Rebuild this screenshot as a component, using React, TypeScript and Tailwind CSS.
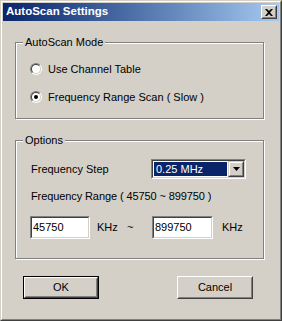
import React from 'react';

const font = { fontFamily: '"Liberation Sans", Arial, sans-serif' };

const Radio: React.FC<{ checked?: boolean; label: string }> = ({ checked, label }) => (
  <div className="flex items-center h-4">
    <span className="w-3 h-3 rounded-full border border-t-[#808080] border-l-[#808080] border-b-white border-r-white flex">
      <span className="flex-1 rounded-full border border-t-[#404040] border-l-[#404040] border-b-[#d4d0c8] border-r-[#d4d0c8] bg-white flex items-center justify-center">
        {checked && <span className="w-1 h-1 rounded-full bg-black" />}
      </span>
    </span>
    <span className="ml-[6px] text-[11px] text-black leading-none">{label}</span>
  </div>
);

const Group: React.FC<{ title: string; className: string; children: React.ReactNode }> = ({ title, className, children }) => (
  <div className={`relative ml-[12px] w-[249px] border border-[#808080] shadow-[inset_1px_1px_0_#fff,1px_1px_0_#fff] ${className}`}>
    {/* legend sits over the etched line */}
    <span className="absolute -top-[8px] left-[7px] px-[2px] bg-[#d4d0c8] text-[11px] leading-[14px] text-black">{title}</span>
    {children}
  </div>
);

const Sunken: React.FC<{ className: string; children: React.ReactNode }> = ({ className, children }) => (
  <div className={`border border-t-[#808080] border-l-[#808080] border-b-white border-r-white ${className}`}>
    <div className="h-full border border-t-[#404040] border-l-[#404040] border-b-[#d4d0c8] border-r-[#d4d0c8] bg-white flex items-center">
      {children}
    </div>
  </div>
);

const Button: React.FC<{ label: string; isDefault?: boolean }> = ({ label, isDefault }) => (
  <div className={`w-[76px] h-[23px] ${isDefault ? 'border border-black' : ''}`}>
    <div className="h-full border border-t-white border-l-white border-b-[#404040] border-r-[#404040]">
      <div className="h-full border border-t-[#d4d0c8] border-l-[#d4d0c8] border-b-[#808080] border-r-[#808080] flex items-center justify-center text-[11px] text-black">
        {label}
      </div>
    </div>
  </div>
);

export default function App() {
  return (
    <div className="w-[282px] h-[321px] bg-[#d4d0c8] select-none" style={font}>
      <div className="h-full border border-t-[#d4d0c8] border-l-[#d4d0c8] border-b-[#404040] border-r-[#404040]">
        <div className="h-full border border-t-white border-l-white border-b-[#808080] border-r-[#808080] p-px">
          {/* Title bar */}
          <div className="h-[18px] bg-gradient-to-r from-[#0a246a] to-[#a6caf0] flex items-center justify-between pl-[3px] pr-[2px]">
            <span className="text-white font-bold text-[11.5px] leading-none">AutoScan Settings</span>
            <div className="w-4 h-[14px] border border-t-white border-l-white border-b-[#404040] border-r-[#404040]">
              <div className="h-full border border-t-[#d4d0c8] border-l-[#d4d0c8] border-b-[#808080] border-r-[#808080] bg-[#d4d0c8] flex items-center justify-center">
                <svg width="8" height="7" viewBox="0 0 8 7">
                  <path d="M0 0h2l2 2 2-2h2L5 3.5 8 7H6L4 5 2 7H0l3-3.5z" fill="#000" />
                </svg>
              </div>
            </div>
          </div>

          {/* AutoScan Mode */}
          <Group title="AutoScan Mode" className="mt-[21px] h-[77px] pt-[18px] pl-[14px]">
            <Radio label="Use Channel Table" />
            <div className="mt-[12px]">
              <Radio checked label="Frequency Range Scan ( Slow )" />
            </div>
          </Group>

          {/* Options */}
          <Group title="Options" className="mt-[21px] h-[119px] pt-[18px] pl-[14px]">
            <div className="flex items-center h-5">
              <span className="w-[121px] pl-px text-[11px] text-black">Frequency Step</span>
              <Sunken className="w-[95px] h-5">
                <div className="flex-1 h-full p-px">
                  <div className="h-full bg-[#0a246a] text-white text-[11px] flex items-center pl-[2px]">0.25 MHz</div>
                </div>
                <div className="w-4 h-full border border-t-[#d4d0c8] border-l-[#d4d0c8] border-b-[#404040] border-r-[#404040]">
                  <div className="h-full border border-t-white border-l-white border-b-[#808080] border-r-[#808080] bg-[#d4d0c8] flex items-center justify-center">
                    <svg width="7" height="4" viewBox="0 0 7 4">
                      <path d="M0 0h7L3.5 4z" fill="#000" />
                    </svg>
                  </div>
                </div>
              </Sunken>
            </div>
            <div className="mt-[10px] pl-px h-[14px] text-[11px] leading-[14px] text-black tracking-[-0.1px]">Frequency Range ( 45750 ~ 899750 )</div>
            <div className="mt-[13px] flex items-center">
              <Sunken className="w-[60px] h-[23px]">
                <span className="pl-px text-[11px] text-black">45750</span>
              </Sunken>
              <span className="ml-[7px] w-[30px] text-[11px] text-black">KHz</span>
              <span className="w-[25px] text-[11px] text-black">~</span>
              <Sunken className="w-[61px] h-[23px]">
                <span className="pl-px text-[11px] text-black">899750</span>
              </Sunken>
              <span className="ml-[9px] text-[11px] text-black">KHz</span>
            </div>
          </Group>

          {/* Buttons */}
          <div className="mt-[17px] flex pl-[20px]">
            <Button label="OK" isDefault />
            <div className="ml-[78px]">
              <Button label="Cancel" />
            </div>
          </div>
        </div>
      </div>
    </div>
  );
}
